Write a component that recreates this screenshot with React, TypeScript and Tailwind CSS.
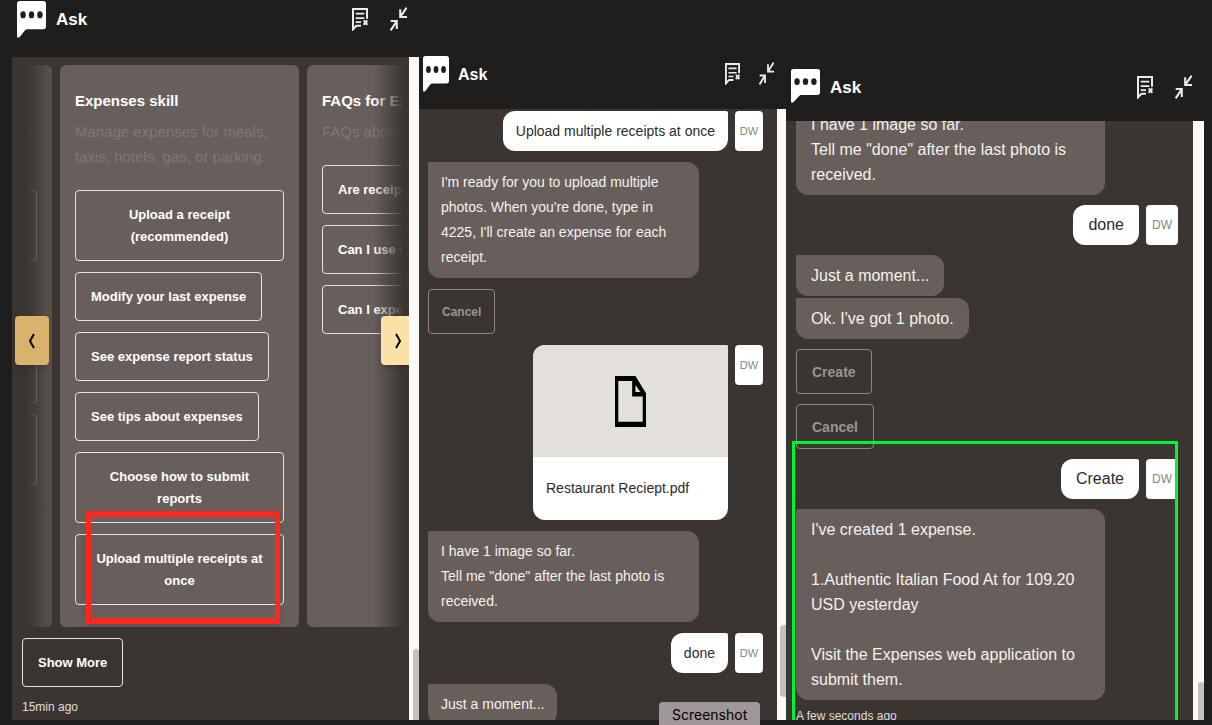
import React from 'react';
import clsx from 'clsx';

type Size = 'sm' | 'lg';

const ChatIcon = ({ className }: { className?: string }) => (
  <svg viewBox="0 0 86 113" preserveAspectRatio="none" className={clsx('shrink-0', className)} aria-hidden="true">
    <path d="M8 0H78a8 8 0 0 1 8 8V78a8 8 0 0 1-8 8H32c-5 0-7 2-10 6L8 110Q0 116 0 106V8a8 8 0 0 1 8-8z" fill="#fff" />
    <ellipse cx="18" cy="42" rx="8" ry="11" fill="#1f1e1c" />
    <ellipse cx="43" cy="42" rx="8" ry="11" fill="#1f1e1c" />
    <ellipse cx="68" cy="42" rx="8" ry="11" fill="#1f1e1c" />
  </svg>
);

const NotesIcon = ({ className }: { className: string }) => (
  <svg viewBox="0 0 48 70" preserveAspectRatio="none" className={className} fill="none" stroke="#eeece8" strokeWidth="6" aria-hidden="true">
    <path d="M45 33V3H3V65L13 54H27" />
    <path d="M11 17H37M11 31H37M11 43H27" strokeWidth="5" />
    <path d="M35 38L46 51M46 38L35 51" />
  </svg>
);

const CollapseIcon = ({ className }: { className: string }) => (
  <svg viewBox="0 0 50 72" preserveAspectRatio="none" className={className} fill="none" stroke="#eeece8" strokeWidth="6" aria-hidden="true">
    <path d="M30 7V30H50M31 28L49 2" />
    <path d="M2 42H20V66M19 44L2 70" />
  </svg>
);

const FileIcon = () => (
  <svg viewBox="0 0 94 154" preserveAspectRatio="none" className="h-[51px] w-[31px]" aria-hidden="true">
    <path fillRule="evenodd" d="M0 0H62L94 52V154H0ZM10 15V138H84V62H52V15ZM62 27V48H77Z" fill="#000" />
  </svg>
);

const Header = ({ size, className, iconClass }: { size: Size; className: string; iconClass: string }) => (
  <header className={clsx('flex shrink-0 items-start bg-[#1f1e1c]', className)}>
    <ChatIcon className={iconClass} />
    <h2 className={clsx('mt-[5px] leading-7 font-bold text-white', size === 'sm' ? 'ml-[9px] text-base' : 'ml-2.5 text-[17px]')}>Ask</h2>
    <div className={clsx('ml-auto mt-1.5 flex items-center', size === 'sm' ? 'gap-[19px]' : 'gap-[22px]')}>
      <button type="button" aria-label="Clear conversation">
        <NotesIcon className={size === 'sm' ? 'h-[22px] w-[15px]' : 'h-[23px] w-4'} />
      </button>
      <button type="button" aria-label="Collapse">
        <CollapseIcon className={size === 'sm' ? 'h-[23px] w-[15px]' : 'h-6 w-[17px]'} />
      </button>
    </div>
  </header>
);

const ScrollTrack = ({ className, thumbClass }: { className: string; thumbClass: string }) => (
  <div className={clsx('flex shrink-0 flex-col items-end bg-[#fafafa]', className)}>
    <div className={clsx('w-1.5 bg-[#c1c1c1]', thumbClass)} />
  </div>
);

const BotMessage = ({ size, className, children }: { size: Size; className?: string; children: React.ReactNode }) => (
  <div
    className={clsx(
      'self-start rounded-xl rounded-tl-xs bg-[#685f5c] py-2 leading-[25px] text-[#f4f2f0]',
      size === 'sm' ? 'px-[13px] text-sm' : 'px-[15px] text-base',
      className
    )}
  >
    {children}
  </div>
);

const Avatar = ({ size }: { size: Size }) => (
  <div
    className={clsx(
      'flex h-10 shrink-0 items-center justify-center rounded-sm bg-white text-[#858585]',
      size === 'sm' ? 'w-7 text-[11px]' : 'w-8 text-xs'
    )}
  >
    DW
  </div>
);

const UserMessage = ({ size, children }: { size: Size; children: React.ReactNode }) => (
  <div className="flex gap-[7px] self-end">
    <div
      className={clsx(
        'rounded-xl rounded-tr-xs bg-white py-2',
        size === 'sm' ? 'px-[13px] text-sm' : 'px-[15px] text-base'
      )}
    >
      <p className="leading-6 text-[#2b2b2b]">{children}</p>
    </div>
    <Avatar size={size} />
  </div>
);

const ReplyButton = ({ size, children }: { size: Size; children: React.ReactNode }) => (
  <button
    type="button"
    disabled
    className={clsx(
      'h-[45px] shrink-0 self-start rounded border border-[#8b8783] font-bold text-[#99948f]',
      size === 'sm' ? 'px-[13px] text-xs' : 'px-[15px] text-sm'
    )}
  >
    {children}
  </button>
);

const SkillButton = ({ children }: { children: React.ReactNode }) => (
  <button
    type="button"
    className="rounded border border-[#e4e2e0] px-[15px] pt-[13px] pb-3 text-[13px] leading-[22px] font-bold text-white"
  >
    {children}
  </button>
);

const cardClass = 'shrink-0 rounded-md bg-[#685f5c] px-[15px] pt-[23px]';

const expenseActions = [
  'Upload a receipt (recommended)',
  'Modify your last expense',
  'See expense report status',
  'See tips about expenses',
  'Choose how to submit reports',
  'Upload multiple receipts at once',
];

const faqActions = ['Are receipts required?', 'Can I use my card?', 'Can I expense it?'];

const SkillCarousel = () => (
  <div className="relative">
    <div className="flex gap-2 overflow-hidden">
      {/* tail end of the previous card */}
      <div className="flex w-10 shrink-0 flex-col rounded-r-md bg-[#685f5c] pt-[55px] pr-[15px]">
        <p className="text-right text-[15px] leading-[25px] text-[#8a8886]">s.</p>
        <div className="mt-[45px] h-[71px] rounded-r border border-l-0 border-[#e4e2e0]" />
        <div className="mt-[71px] h-[71px] rounded-r border border-l-0 border-[#e4e2e0]" />
        <div className="mt-[11px] h-[71px] rounded-r border border-l-0 border-[#e4e2e0]" />
      </div>
      <section className={clsx(cardClass, 'relative w-[239px] pb-[22px]')}>
        <h3 className="text-[15px] leading-[25px] font-bold text-white">Expenses skill</h3>
        <p className="mt-1.5 text-[15px] leading-[25px] text-[#7b7a78]">
          Manage expenses for meals,
          <br />
          taxis, hotels, gas, or parking.
        </p>
        <div className="mt-[21px] flex flex-col items-start gap-[11px]">
          {expenseActions.map((label) => (
            <SkillButton key={label}>{label}</SkillButton>
          ))}
        </div>
        <div className="pointer-events-none absolute right-[19px] bottom-[3px] left-[26px] h-[113px] border-x-5 border-y-6 border-[#ff281e] shadow-md" />
      </section>
      <section className={clsx(cardClass, 'w-[239px]')}>
        <h3 className="text-[15px] leading-[25px] font-bold text-white">FAQs for Expenses</h3>
        <p className="mt-1.5 text-[15px] leading-[25px] text-[#7b7a78]">FAQs about expenses</p>
        <div className="mt-[21px] flex flex-col items-start gap-[11px]">
          {faqActions.map((label) => (
            <SkillButton key={label}>{label}</SkillButton>
          ))}
        </div>
      </section>
    </div>
    <div className="pointer-events-none absolute inset-y-0 left-0 w-12 bg-linear-to-r from-[#3a3531] from-30% to-[#3a3531]/10" />
    <div className="pointer-events-none absolute inset-y-0 right-0 w-9 bg-linear-to-l from-[#3a3531] from-15% to-transparent" />
    <button
      type="button"
      aria-label="Previous"
      className="absolute top-[251px] left-[3px] flex h-[49px] w-[34px] items-center justify-center rounded bg-[#d9b26b] shadow-md"
    >
      <svg viewBox="0 0 8 16" className="h-4 w-2" fill="none" stroke="#000" strokeWidth="2" aria-hidden="true"><path d="M6 1L2 8L6 15" /></svg>
    </button>
    <button
      type="button"
      aria-label="Next"
      className="absolute top-[251px] right-0 flex h-[49px] w-7 items-center justify-center rounded-l bg-[#fbe0a8] pl-1.5 shadow-md"
    >
      <svg viewBox="0 0 8 16" className="h-4 w-2" fill="none" stroke="#000" strokeWidth="2" aria-hidden="true"><path d="M2 1L6 8L2 15" /></svg>
    </button>
  </div>
);

const SkillsPanel = () => (
  <section className="flex min-h-0 min-w-0 flex-col">
    <Header size="lg" className="h-[57px] pt-px pr-3 pl-[5px]" iconClass="h-[37px] w-[29px]" />
    <div className="flex min-h-0 flex-1">
      <div className="flex min-w-0 flex-1 flex-col overflow-hidden bg-[#3a3531] pt-2">
        <SkillCarousel />
        <div className="mt-[11px] pl-2.5">
          <SkillButton>Show More</SkillButton>
          <p className="mt-2.5 text-xs leading-5 text-[#e0dedb]">15min ago</p>
        </div>
      </div>
      <ScrollTrack className="w-2.5" thumbClass="mt-auto h-[71px] rounded-t" />
    </div>
  </section>
);

const UploadPanel = () => (
  <section className="flex min-h-0 min-w-0 flex-col pt-[55px]">
    <Header size="sm" className="h-[54px] pt-px pr-3 pl-1" iconClass="h-9 w-[26px]" />
    <div className="flex min-h-0 flex-1">
      <div className="flex min-w-0 flex-1 flex-col gap-[11px] overflow-hidden bg-[#3a3531] pt-0.5 pr-3.5 pl-[9px]">
        <UserMessage size="sm">Upload multiple receipts at once</UserMessage>
        <BotMessage size="sm" className="w-[271px]">
          I'm ready for you to upload multiple
          <br />
          photos. When you're done, type in
          <br />
          4225, I'll create an expense for each receipt.
        </BotMessage>
        <ReplyButton size="sm">Cancel</ReplyButton>
        <div className="flex gap-[7px] self-end">
          <div className="w-[195px] overflow-hidden rounded-xl rounded-tr-xs bg-white">
            <div className="flex h-28 items-center justify-center bg-[#e3e0db]">
              <FileIcon />
            </div>
            <p className="px-[13px] py-[19px] text-sm leading-[25px] text-[#2b2b2b]">Restaurant Reciept.pdf</p>
          </div>
          <Avatar size="sm" />
        </div>
        <BotMessage size="sm" className="w-[271px]">
          I have 1 image so far.
          <br />
          Tell me "done" after the last photo is received.
        </BotMessage>
        <UserMessage size="sm">done</UserMessage>
        <BotMessage size="sm">Just a moment...</BotMessage>
      </div>
      <ScrollTrack className="w-[9px]" thumbClass="mt-auto mb-[23px] h-[72px] rounded-l" />
    </div>
  </section>
);

const CreatePanel = () => (
  <section className="flex min-h-0 min-w-0 flex-col pt-[67px]">
    <Header size="lg" className="h-[54px] pt-0.5 pr-3 pl-[5px]" iconClass="h-[34px] w-[29px]" />
    <div className="flex min-h-0 flex-1">
      <div className="relative min-w-0 flex-1 overflow-hidden bg-[#3a3531]">
        {/* the thread is scrolled, so the first message starts above the fold */}
        <div className="-mt-[17px] flex flex-col gap-2.5 pr-[15px] pl-2.5">
          <BotMessage size="lg" className="w-[309px]">
            I have 1 image so far.
            <br />
            Tell me "done" after the last photo is received.
          </BotMessage>
          <UserMessage size="lg">done</UserMessage>
          <div className="flex flex-col gap-0.5">
            <BotMessage size="lg">Just a moment...</BotMessage>
            <BotMessage size="lg">Ok. I've got 1 photo.</BotMessage>
          </div>
          <ReplyButton size="lg">Create</ReplyButton>
          <ReplyButton size="lg">Cancel</ReplyButton>
          <UserMessage size="lg">Create</UserMessage>
          <BotMessage size="lg" className="w-[309px]">
            <p>I've created 1 expense.</p>
            <p className="mt-[25px]">1.Authentic Italian Food At for 109.20 USD yesterday</p>
            <p className="mt-[25px]">Visit the Expenses web application to submit them.</p>
          </BotMessage>
          <p className="text-xs leading-3 text-[#e0dedb]">A few seconds ago</p>
        </div>
        <div className="pointer-events-none absolute top-[320px] right-[15px] bottom-0 left-1.5 border-3 border-b-0 border-[#00f531]" />
      </div>
      <ScrollTrack className="w-[11px]" thumbClass="mt-auto h-[38px] rounded-t" />
    </div>
  </section>
);

export default function App() {
  return (
    <main className="relative grid h-screen grid-cols-[407fr_367fr_418fr] grid-rows-1 overflow-hidden bg-[#1e1e1e] pr-2 pb-[5px] pl-3 font-['Liberation_Sans',Arial,sans-serif]">
      <SkillsPanel />
      <UploadPanel />
      <CreatePanel />
      <div className="absolute bottom-0 left-[659px] rounded-t bg-[#a0979a] px-[13px] pt-0.5 font-['Inter',sans-serif] text-sm leading-[21px] text-black">
        Screenshot
      </div>
    </main>
  );
}
